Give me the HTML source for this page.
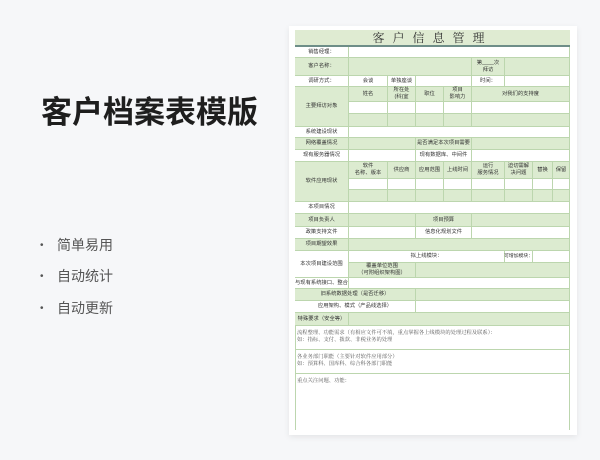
<!DOCTYPE html>
<html><head><meta charset="utf-8"><style>
*{margin:0;padding:0;box-sizing:border-box}
body{width:600px;height:460px;background:#f6f7f9;position:relative;overflow:hidden;font-family:"Liberation Sans","Noto Sans CJK SC",sans-serif}
.h1{position:absolute;left:41px;top:87px;font-size:31px;font-weight:bold;color:#1e1e1e;letter-spacing:0px}
.b{position:absolute;left:40px;font-size:14px;color:#555}
.b span{display:inline-block;width:17px;font-size:10px;vertical-align:2px}
.card{position:absolute;left:289px;top:26px;width:288px;height:409px;background:#fff;box-shadow:0 2px 6px rgba(0,0,0,.08)}
.tb{position:absolute;left:295px;top:30px;width:275px;height:15px;background:#dfebd2;text-align:center;font-family:"Noto Serif CJK SC",serif;font-size:12px;line-height:15px;letter-spacing:8px;color:#333}
.ln{position:absolute;left:295px;top:45px;width:275px;height:2px;background:#6e8e88}
.c{position:absolute;border-right:1px solid #bcd6ae;border-bottom:1px solid #bcd6ae;font-size:5.3px;color:#333;display:flex;align-items:center;justify-content:center;text-align:center;line-height:1.25;background:#fff;white-space:nowrap}
.g{background:#dcebd0}
.t{position:absolute;left:295px;width:275px;border:1px solid #bcd6ae;border-top:none;font-family:"Noto Serif CJK SC",serif;font-size:5.3px;color:#555;padding:3px 1px;line-height:1.35;background:#fff}
</style></head><body>
<div class="h1">客户档案表模版</div>
<div class="b" style="top:235px"><span>•</span>简单易用</div>
<div class="b" style="top:266px"><span>•</span>自动统计</div>
<div class="b" style="top:298px"><span>•</span>自动更新</div>
<div class="card"></div>
<div class="tb">客户信息管理</div>
<div class="ln"></div>
<div style="position:absolute;left:295px;top:47px;width:1px;height:383px;background:#bcd6ae"></div>

<div class="c" style="left:295px;top:47px;width:54px;height:11px">销售经理：</div>
<div class="c" style="left:349px;top:47px;width:221px;height:11px"></div>

<div class="c g" style="left:295px;top:58px;width:54px;height:18px">客户名称：</div>
<div class="c g" style="left:349px;top:58px;width:123px;height:18px"></div>
<div class="c g" style="left:472px;top:58px;width:33px;height:18px">第____次<br>拜访</div>
<div class="c g" style="left:505px;top:58px;width:65px;height:18px"></div>

<div class="c" style="left:295px;top:76px;width:54px;height:11px">调研方式：</div>
<div class="c" style="left:349px;top:76px;width:39px;height:11px">会谈</div>
<div class="c" style="left:388px;top:76px;width:28px;height:11px">单独座谈</div>
<div class="c" style="left:416px;top:76px;width:56px;height:11px"></div>
<div class="c" style="left:472px;top:76px;width:33px;height:11px">时间：</div>
<div class="c" style="left:505px;top:76px;width:65px;height:11px"></div>

<div class="c g" style="left:295px;top:87px;width:54px;height:40px">主要拜访对象</div>
<div class="c g" style="left:349px;top:87px;width:39px;height:15px">姓名</div>
<div class="c g" style="left:388px;top:87px;width:28px;height:15px">所在处<br>(科)室</div>
<div class="c g" style="left:416px;top:87px;width:28px;height:15px">职位</div>
<div class="c g" style="left:444px;top:87px;width:28px;height:15px">项目<br>影响力</div>
<div class="c g" style="left:472px;top:87px;width:98px;height:15px">对我们的支持度</div>
<div class="c" style="left:349px;top:102px;width:39px;height:12px"></div>
<div class="c" style="left:388px;top:102px;width:28px;height:12px"></div>
<div class="c" style="left:416px;top:102px;width:28px;height:12px"></div>
<div class="c" style="left:444px;top:102px;width:28px;height:12px"></div>
<div class="c" style="left:472px;top:102px;width:98px;height:12px"></div>
<div class="c g" style="left:349px;top:114px;width:39px;height:13px"></div>
<div class="c g" style="left:388px;top:114px;width:28px;height:13px"></div>
<div class="c g" style="left:416px;top:114px;width:28px;height:13px"></div>
<div class="c g" style="left:444px;top:114px;width:28px;height:13px"></div>
<div class="c g" style="left:472px;top:114px;width:98px;height:13px"></div>

<div class="c" style="left:295px;top:127px;width:54px;height:11px">系统建设现状</div>
<div class="c" style="left:349px;top:127px;width:221px;height:11px"></div>

<div class="c g" style="left:295px;top:138px;width:54px;height:12px">网络覆盖情况</div>
<div class="c g" style="left:349px;top:138px;width:67px;height:12px"></div>
<div class="c g" style="left:416px;top:138px;width:56px;height:12px">是否满足本次项目需要</div>
<div class="c g" style="left:472px;top:138px;width:98px;height:12px"></div>

<div class="c" style="left:295px;top:150px;width:54px;height:12px">现有服务器情况</div>
<div class="c" style="left:349px;top:150px;width:67px;height:12px"></div>
<div class="c" style="left:416px;top:150px;width:56px;height:12px">现有数据库、中间件</div>
<div class="c" style="left:472px;top:150px;width:98px;height:12px"></div>

<div class="c g" style="left:295px;top:162px;width:54px;height:40px">软件应用现状</div>
<div class="c g" style="left:349px;top:162px;width:39px;height:17px">软件<br>名称、版本</div>
<div class="c g" style="left:388px;top:162px;width:28px;height:17px">供应商</div>
<div class="c g" style="left:416px;top:162px;width:28px;height:17px">应用范围</div>
<div class="c g" style="left:444px;top:162px;width:28px;height:17px">上线时间</div>
<div class="c g" style="left:472px;top:162px;width:33px;height:17px">运行<br>服务情况</div>
<div class="c g" style="left:505px;top:162px;width:28px;height:17px">迫切需解<br>决问题</div>
<div class="c g" style="left:533px;top:162px;width:20px;height:17px">替换</div>
<div class="c g" style="left:553px;top:162px;width:17px;height:17px">保留</div>
<div class="c" style="left:349px;top:179px;width:39px;height:11px"></div>
<div class="c" style="left:388px;top:179px;width:28px;height:11px"></div>
<div class="c" style="left:416px;top:179px;width:28px;height:11px"></div>
<div class="c" style="left:444px;top:179px;width:28px;height:11px"></div>
<div class="c" style="left:472px;top:179px;width:33px;height:11px"></div>
<div class="c" style="left:505px;top:179px;width:28px;height:11px"></div>
<div class="c" style="left:533px;top:179px;width:20px;height:11px"></div>
<div class="c" style="left:553px;top:179px;width:17px;height:11px"></div>
<div class="c g" style="left:349px;top:190px;width:39px;height:12px"></div>
<div class="c g" style="left:388px;top:190px;width:28px;height:12px"></div>
<div class="c g" style="left:416px;top:190px;width:28px;height:12px"></div>
<div class="c g" style="left:444px;top:190px;width:28px;height:12px"></div>
<div class="c g" style="left:472px;top:190px;width:33px;height:12px"></div>
<div class="c g" style="left:505px;top:190px;width:28px;height:12px"></div>
<div class="c g" style="left:533px;top:190px;width:20px;height:12px"></div>
<div class="c g" style="left:553px;top:190px;width:17px;height:12px"></div>

<div class="c" style="left:295px;top:202px;width:54px;height:12px">本项目情况</div>
<div class="c" style="left:349px;top:202px;width:221px;height:12px"></div>

<div class="c g" style="left:295px;top:214px;width:54px;height:13px">项目负责人</div>
<div class="c g" style="left:349px;top:214px;width:67px;height:13px"></div>
<div class="c g" style="left:416px;top:214px;width:56px;height:13px">项目预算</div>
<div class="c g" style="left:472px;top:214px;width:98px;height:13px"></div>

<div class="c" style="left:295px;top:227px;width:54px;height:12px">政策支持文件</div>
<div class="c" style="left:349px;top:227px;width:67px;height:12px"></div>
<div class="c" style="left:416px;top:227px;width:56px;height:12px">信息化规划文件</div>
<div class="c" style="left:472px;top:227px;width:98px;height:12px"></div>

<div class="c g" style="left:295px;top:239px;width:54px;height:12px">项目期望效果</div>
<div class="c g" style="left:349px;top:239px;width:221px;height:12px"></div>

<div class="c" style="left:295px;top:251px;width:54px;height:27px">本次项目建设范围</div>
<div class="c" style="left:349px;top:251px;width:156px;height:12px">拟上线模块：</div>
<div class="c" style="left:505px;top:251px;width:28px;height:12px;font-size:4.8px">可增加模块：</div>
<div class="c" style="left:533px;top:251px;width:37px;height:12px"></div>
<div class="c g" style="left:349px;top:263px;width:67px;height:15px">覆盖单位范围<br>（可附组织架构图）</div>
<div class="c g" style="left:416px;top:263px;width:154px;height:15px"></div>

<div class="c" style="left:295px;top:278px;width:54px;height:11px">与现有系统接口、整合</div>
<div class="c" style="left:349px;top:278px;width:221px;height:11px"></div>

<div class="c g" style="left:295px;top:289px;width:121px;height:12px">旧系统数据处理（是否迁移）</div>
<div class="c g" style="left:416px;top:289px;width:154px;height:12px"></div>

<div class="c" style="left:295px;top:301px;width:121px;height:12px">应用架构、模式（产品线选择）</div>
<div class="c" style="left:416px;top:301px;width:154px;height:12px"></div>

<div class="c g" style="left:295px;top:313px;width:54px;height:13px">特殊要求（安全等）</div>
<div class="c g" style="left:349px;top:313px;width:221px;height:13px"></div>

<div class="t" style="top:326px;height:24px">流程整理、功能需求（有相应文件可不填，重点掌握各上线模块的处理过程及联系）：<br>如：指标、支付、拨款、非税业务的处理</div>
<div class="t" style="top:350px;height:24px">各业务部门职能（主要针对软件应用部分）<br>如：预算科、国库科、综合科各部门职能</div>
<div class="t" style="top:374px;height:56px;border-bottom:none">重点关注问题、功能：</div>
</body></html>
